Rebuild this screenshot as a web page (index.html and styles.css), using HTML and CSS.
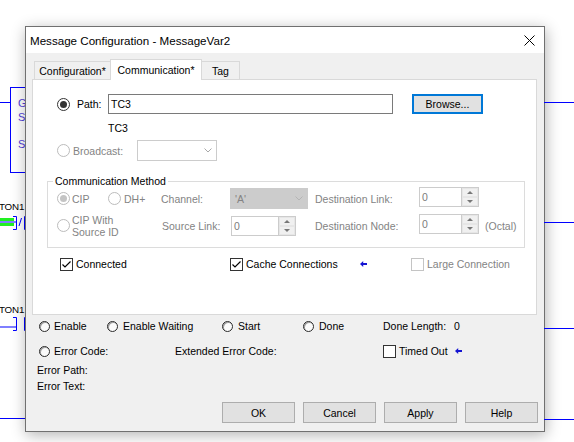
FILE: index.html
```html
<!DOCTYPE html>
<html>
<head>
<meta charset="utf-8">
<title>Message Configuration</title>
<link rel="stylesheet" href="styles.css">
</head>
<body>
<div class="desktop">
  <!-- ladder diagram behind the dialog -->
  <div class="wire w-l1"></div>
  <div class="ibox"><span>G</span><span>S</span><span class="gap">S</span></div>
  <div class="tag-label t1">TON1</div>
  <svg class="contact c1" width="30" height="18" viewBox="0 0 30 18">
    <rect x="0" y="4" width="14" height="3" fill="#22f022"/>
    <rect x="0" y="9" width="14" height="3" fill="#22f022"/>
    <rect x="0" y="7.5" width="16" height="1" fill="#0000ff"/>
    <path d="M13 2.5 H16.5 V15.5 H13" fill="none" stroke="#0000ff" stroke-width="1"/>
    <path d="M19 12 L21.5 4" fill="none" stroke="#0000ff" stroke-width="1"/>
    <path d="M27 2.5 H24.5 V15.5 H27" fill="none" stroke="#0000ff" stroke-width="1"/>
  </svg>
  <div class="tag-label t2">TON1</div>
  <svg class="contact c2" width="30" height="18" viewBox="0 0 30 18">
    <rect x="0" y="9.5" width="16" height="1" fill="#0000ff"/>
    <path d="M13 0.5 H16.5 V13.5 H13" fill="none" stroke="#0000ff" stroke-width="1"/>
    <path d="M27 0.5 H24.5 V13.5 H27" fill="none" stroke="#0000ff" stroke-width="1"/>
  </svg>
  <div class="wire w-l4"></div>
  <div class="wire w-r w-r1"></div>
  <div class="wire w-r w-r2"></div>
  <div class="wire w-r w-r3"></div>
  <div class="wire w-r w-r4"></div>

  <div class="dialog">
    <div class="titlebar">
      <span class="title">Message Configuration - MessageVar2</span>
      <span class="close">
        <svg width="11" height="11" viewBox="0 0 11 11"><path d="M0.5 0.5 L10.5 10.5 M10.5 0.5 L0.5 10.5" stroke="#000" stroke-width="1" fill="none"/></svg>
      </span>
    </div>
    <div class="body">
      <div class="tabs">
        <div class="tab tab-config">Configuration*</div>
        <div class="tab tab-comm">Communication*</div>
        <div class="tab tab-tag">Tag</div>
      </div>
      <div class="panel">
        <div class="row path-row">
          <span class="radio on"></span>
          <span class="path-label">Path:</span>
          <span class="textbox">TC3</span>
          <span class="browse">Browse...</span>
        </div>
        <div class="tc3">TC3</div>
        <div class="row bc-row">
          <span class="radio dis"></span>
          <span class="bc-label dis-text">Broadcast:</span>
          <span class="combo combo-bc"><span></span>
            <svg width="8" height="5" viewBox="0 0 8 5"><path d="M0.5 0.5 L4 4 L7.5 0.5" fill="none" stroke="#a8a8a8" stroke-width="1"/></svg>
          </span>
        </div>
        <fieldset class="group">
          <legend>Communication Method</legend>
          <div class="cm-grid">
            <span class="opt"><span class="radio dis on"></span><span class="dis-text">CIP</span></span>
            <span class="opt opt-dh"><span class="radio dis"></span><span class="dis-text">DH+</span></span>
            <span class="dis-text">Channel:</span>
            <span class="combo combo-ch"><span class="dis-text">'A'</span>
              <svg width="8" height="5" viewBox="0 0 8 5"><path d="M0.5 0.5 L4 4 L7.5 0.5" fill="none" stroke="#b4b4b4" stroke-width="1"/></svg>
            </span>
            <span class="dis-text">Destination Link:</span>
            <span class="spin spin-dl"><span class="spin-val">0</span><span class="spin-btns"><span><i class="up"></i></span><span><i class="down"></i></span></span></span>
            <span></span>

            <span class="opt opt-src"><span class="radio dis"></span><span class="dis-text two-line">CIP With<br>Source ID</span></span>
            <span class="dis-text src-label">Source Link:</span>
            <span class="spin spin-sl"><span class="spin-val">0</span><span class="spin-btns"><span><i class="up"></i></span><span><i class="down"></i></span></span></span>
            <span class="dis-text">Destination Node:</span>
            <span class="spin spin-dn"><span class="spin-val">0</span><span class="spin-btns"><span><i class="up"></i></span><span><i class="down"></i></span></span></span>
            <span class="dis-text">(Octal)</span>
          </div>
        </fieldset>
        <div class="check-row">
          <span class="chk-item item-conn"><span class="checkbox"><svg width="11" height="11" viewBox="0 0 11 11"><path d="M1.5 5.5 L4 8 L9.5 2.5" fill="none" stroke="#000" stroke-width="1.2"/></svg></span>Connected</span>
          <span class="chk-item item-cache"><span class="checkbox"><svg width="11" height="11" viewBox="0 0 11 11"><path d="M1.5 5.5 L4 8 L9.5 2.5" fill="none" stroke="#000" stroke-width="1.2"/></svg></span>Cache Connections
            <svg class="arrow arrow-cache" width="7" height="6" viewBox="0 0 7 6"><path d="M0 3 L3.2 0 V2 H7 V4 H3.2 V6 Z" fill="#1414d2"/></svg>
          </span>
          <span class="chk-item"><span class="checkbox dis"></span><span class="dis-text">Large Connection</span></span>
        </div>
      </div>

      <div class="srow srow1">
        <span class="st st-enable"><span class="led"></span>Enable</span>
        <span class="st st-wait"><span class="led"></span>Enable Waiting</span>
        <span class="st st-start"><span class="led"></span>Start</span>
        <span class="st st-done"><span class="led"></span>Done</span>
        <span class="st"><span class="dl-label">Done Length:</span>0</span>
      </div>
      <div class="srow srow2">
        <span class="st st-err"><span class="led"></span>Error Code:</span>
        <span class="st st-ext">Extended Error Code:</span>
        <span class="st st-to"><span class="checkbox"></span>Timed Out
          <svg class="arrow arrow-to" width="7" height="6" viewBox="0 0 7 6"><path d="M0 3 L3.2 0 V2 H7 V4 H3.2 V6 Z" fill="#1414d2"/></svg>
        </span>
      </div>
      <div class="srow srow3">Error Path:</div>
      <div class="srow srow4">Error Text:</div>

      <div class="buttons">
        <span class="btn">OK</span>
        <span class="btn">Cancel</span>
        <span class="btn">Apply</span>
        <span class="btn">Help</span>
      </div>
    </div>
  </div>
</div>
</body>
</html>
```

FILE: styles.css
```css
* { box-sizing: border-box; }
html, body { margin: 0; padding: 0; }
body {
  width: 574px;
  height: 442px;
  overflow: hidden;
  background: #fff;
  font-family: "Liberation Sans", Arial, sans-serif;
  font-size: 10.5px;
  color: #000;
}
.desktop { position: relative; width: 574px; height: 442px; overflow: hidden; }

/* ladder diagram */
.wire { position: absolute; height: 1px; background: #0000ff; }
.w-l1 { left: 0; top: 102px; width: 10px; }
.w-l4 { left: 0; top: 418px; width: 26px; }
.w-r { left: 544px; width: 30px; z-index: 3; }
.w-r1 { top: 102px; }
.w-r2 { top: 222px; }
.w-r3 { top: 328px; }
.w-r4 { top: 419px; }
.ibox {
  position: absolute; left: 10px; top: 87px; width: 40px; height: 86px;
  border: 1px solid #0000ff; padding: 8px 0 0 7px;
  color: #5140d8; font-size: 11px; line-height: 14px;
}
.ibox span { display: block; }
.ibox .gap { margin-top: 13px; }
.tag-label { position: absolute; left: -1px; line-height: 14px; font-size: 9.8px; letter-spacing: -0.2px; }
.t1 { top: 200px; }
.t2 { top: 303px; }
.contact { position: absolute; left: 0; }
.c1 { top: 214px; }
.c2 { top: 317px; }

/* dialog window */
.dialog {
  position: absolute; left: 25px; top: 26px; width: 520px; height: 406px;
  border: 1px solid #707070; background: #f0f0f0;
  box-shadow: 1px 3px 14px rgba(0, 0, 0, 0.30);
  display: flex; flex-direction: column; z-index: 2;
}
.titlebar { height: 26px; flex: none; background: #fff; display: flex; align-items: center; padding-left: 4px; }
.title { font-size: 11.6px; }
.close { margin-left: auto; width: 30px; height: 26px; display: flex; align-items: center; justify-content: center; }
.body { flex: 1; padding: 6px 7px 0 6px; display: flex; flex-direction: column; }

/* tabs */
.tabs { display: flex; align-items: flex-end; height: 20px; padding-left: 2px; }
.tab {
  height: 18px; border: 1px solid #d9d9d9; border-bottom: none; background: #f0f0f0;
  display: flex; align-items: center; justify-content: center;
}
.tab + .tab { margin-left: -1px; }
.tab-config { width: 77px; }
.tab-comm { width: 92px; height: 21px; background: #fff; margin-bottom: -1px; position: relative; z-index: 1; padding-bottom: 1px; }
.tab-tag { width: 39px; }

.panel { height: 236px; border: 1px solid #d9d9d9; background: #fff; display: flex; flex-direction: column; }
.row { display: flex; align-items: center; }

/* controls */
.radio {
  width: 13px; height: 13px; border: 1px solid #333; border-radius: 50%; background: #fff;
  flex: none; display: flex; align-items: center; justify-content: center;
}
.radio.on::after { content: ""; width: 7px; height: 7px; border-radius: 50%; background: #333; }
.radio.dis { border-color: #bcbcbc; }
.radio.dis.on::after { background: #c4c4c4; }
.dis-text { color: #838383; }
.checkbox {
  width: 13px; height: 13px; border: 1px solid #333; background: #fff; flex: none;
  display: flex; align-items: center; justify-content: center;
}
.checkbox.dis { border-color: #c4c4c4; }

.path-row { margin-top: 14px; height: 20px; padding-left: 24px; }
.path-label { margin-left: 7px; width: 31px; }
.textbox { width: 285px; height: 20px; border: 1px solid #7a7a7a; background: #fff; padding-left: 2px; display: flex; align-items: center; }
.browse {
  margin-left: 19px; width: 71px; height: 20px; border: 2px solid #0078d7; background: #e1e1e1;
  display: flex; align-items: center; justify-content: center;
}
.tc3 { margin-top: 7px; height: 14px; line-height: 14px; padding-left: 75px; }
.bc-row { margin-top: 5px; height: 21px; padding-left: 24px; }
.bc-label { margin-left: 3px; width: 64px; }
.combo {
  height: 21px; border: 1px solid #cccccc; background: #fff;
  display: flex; align-items: center; justify-content: space-between; padding: 0 4px;
}
.combo-bc { width: 80px; }
.combo-ch { width: 78px; background: #cccccc; }

/* group box */
.group { margin: 13px 11px 0 14px; border: 1px solid #dcdcdc; padding: 0 0 10px 0; min-width: 0; }
.group legend { padding: 0 2px; margin-left: 5px; line-height: 14px; height: 14px; }
.cm-grid {
  display: grid;
  grid-template-columns: 51px 53px 69px 85px 104px 66px auto;
  grid-template-rows: 21px 23px;
  row-gap: 5px;
  padding-left: 9px;
  align-items: center;
}
.opt { display: flex; align-items: center; gap: 2px; }
.opt-dh { gap: 3px; }
.opt-src { grid-column: span 2; }
.two-line { line-height: 12px; }
.src-label { padding-left: 1px; }
.spin { display: flex; height: 20px; border: 1px solid #cccccc; background: #fff; align-self: start; }
.spin-dl { width: 60px; margin-top: -1px; }
.spin-sl { width: 65px; margin: 2px 0 0 1px; }
.spin-dn { width: 60px; }
.spin-val { flex: 1; padding-left: 2px; display: flex; align-items: center; color: #7d7d7d; }
.spin-btns { width: 17px; display: flex; flex-direction: column; border-left: 1px solid #cccccc; }
.spin-btns span { flex: 1; background: #f0f0f0; display: flex; align-items: center; justify-content: center; border: 1px solid #e6e6e6; }
.spin-btns i { display: block; width: 0; height: 0; border-left: 3px solid transparent; border-right: 3px solid transparent; }
.spin-btns i.up { border-bottom: 3px solid #777; }
.spin-btns i.down { border-top: 3px solid #777; }

.check-row { margin-top: 9px; height: 14px; display: flex; align-items: center; padding-left: 27px; }
.chk-item { display: flex; align-items: center; gap: 3px; }
.item-conn { width: 170px; }
.item-cache { width: 181px; }
.arrow-cache { margin-left: 19px; }

/* status area */
.srow { display: flex; align-items: center; height: 14px; margin-left: 5px; }
.srow1 { margin-top: 4px; }
.srow2 { margin-top: 11px; }
.srow3 { margin-top: 5px; }
.srow4 { margin-top: 2px; }
.st { display: flex; align-items: center; gap: 5px; }
.led {
  width: 11px; height: 11px; border-radius: 50%; border: 1px solid #2a2a2a; background: #fbfbfb;
  box-shadow: inset 1px 1px 0 #a0a0a0; flex: none;
}
.st-enable { width: 70px; padding-left: 2px; gap: 4px; }
.st-wait { width: 115px; }
.st-start { width: 81px; }
.st-done { width: 80px; }
.dl-label { width: 66px; }
.st-err { width: 138px; padding-left: 2px; gap: 4px; }
.st-ext { width: 208px; }
.st-to { gap: 3px; }
.arrow-to { margin-left: 4px; }

.buttons { margin-top: 9px; margin-right: -1px; display: flex; justify-content: flex-end; gap: 8px; }
.btn {
  width: 73px; height: 21px; border: 1px solid #adadad; background: #e1e1e1;
  display: flex; align-items: center; justify-content: center;
}
```
